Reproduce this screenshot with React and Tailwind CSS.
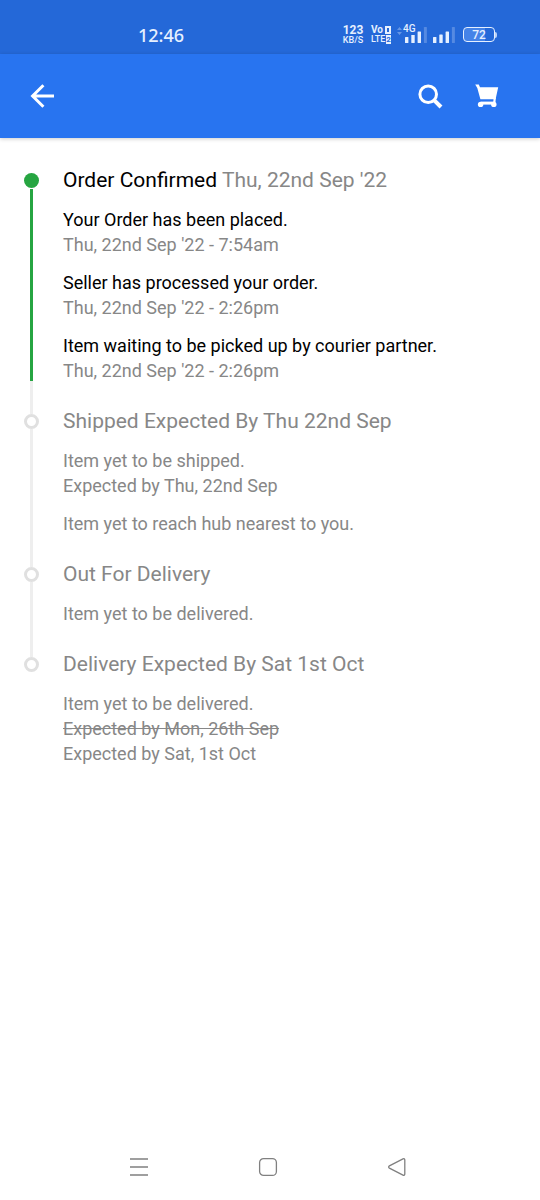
const steps = [
  {
    title: 'Order Confirmed',
    date: "Thu, 22nd Sep '22",
    done: true,
    events: [
      { text: 'Your Order has been placed.', lines: [{ text: "Thu, 22nd Sep '22 - 7:54am" }] },
      { text: 'Seller has processed your order.', lines: [{ text: "Thu, 22nd Sep '22 - 2:26pm" }] },
      { text: 'Item waiting to be picked up by courier partner.', lines: [{ text: "Thu, 22nd Sep '22 - 2:26pm" }] },
    ],
  },
  {
    title: 'Shipped Expected By Thu 22nd Sep',
    events: [
      { text: 'Item yet to be shipped.', lines: [{ text: 'Expected by Thu, 22nd Sep' }] },
      { text: 'Item yet to reach hub nearest to you.', lines: [] },
    ],
  },
  {
    title: 'Out For Delivery',
    events: [{ text: 'Item yet to be delivered.', lines: [] }],
  },
  {
    title: 'Delivery Expected By Sat 1st Oct',
    events: [
      {
        text: 'Item yet to be delivered.',
        lines: [{ text: 'Expected by Mon, 26th Sep', old: true }, { text: 'Expected by Sat, 1st Oct' }],
      },
    ],
  },
];

function SignalBars() {
  return (
    <svg width="22" height="16" viewBox="0 0 22 16" fill="#e6f0ff" aria-hidden="true">
      <rect x="0" y="10" width="3.4" height="6" rx="0.6" />
      <rect x="6.3" y="7.5" width="3.4" height="8.5" rx="0.6" />
      <rect x="12.6" y="4.5" width="3.4" height="11.5" rx="0.6" />
      <rect x="18.9" y="0" width="3" height="16" rx="0.6" fillOpacity="0.25" />
    </svg>
  );
}

function StatusBar() {
  return (
    <div className="flex h-[54px] items-center justify-between bg-[#2468d8] pt-[15px] pr-[43px] pl-[138px] text-[#e6f0ff]">
      <span className="font-['Noto_Sans',sans-serif] text-lg leading-5 font-medium">12:46</span>
      <div className="flex items-center gap-1.5">
        <div className="flex w-5 flex-col items-center font-medium">
          <span className="text-[12px] leading-[10px] font-bold">123</span>
          <span className="text-[9px] leading-[10px]">KB/S</span>
        </div>
        <div className="ml-0.5 flex w-5 flex-col gap-px text-[10px] leading-[9px] font-bold">
          <span className="flex items-center justify-between">
            Vo
            <span className="h-[8px] w-[6px] border-2 border-[#e6f0ff]" />
          </span>
          <span className="flex items-center justify-between text-[9px] font-medium">
            LTE
            <span className="w-[5px] bg-[#e6f0ff] text-center text-[8px] font-bold text-[#2468d8]">2</span>
          </span>
        </div>
        <div className="relative ml-2 flex">
          <SignalBars />
          <span className="absolute -top-1 -left-0.5 bg-[#2468d8] text-[10px] leading-[12px] font-medium">4G</span>
          <svg className="absolute top-0 -left-2" width="5" height="8" viewBox="0 0 5 8" fill="#e6f0ff" fillOpacity="0.35" aria-hidden="true">
            <path d="M2.5 0 5 3H0zM2.5 8 0 5h5z" />
          </svg>
        </div>
        <SignalBars />
        <div className="ml-0.5 flex items-center">
          <span className="h-[15px] w-8 rounded-[4px] border border-[#e6f0ff] bg-linear-to-r from-[#4583e8] from-70% to-[#2468d8] to-70% text-center text-[12px] leading-[14px] font-medium">
            72
          </span>
          <span className="h-1.5 w-0.5 rounded-r-sm bg-[#b9d2fa]" />
        </div>
      </div>
    </div>
  );
}

function Header() {
  return (
    <header className="flex h-[84px] items-center justify-between bg-[#2874f0] pr-[41px] pl-[30px] text-white shadow-[0_1px_4px_rgba(0,0,0,0.2)]">
      <button type="button" aria-label="Back">
        <svg width="24" height="24" viewBox="0 0 24 24" fill="none" stroke="currentColor" strokeWidth="3">
          <path d="M24 12H3M13.4 1.2 2.6 12l10.8 10.8" />
        </svg>
      </button>
      <div className="flex items-center gap-8">
        <button type="button" aria-label="Search">
          <svg width="25" height="25" viewBox="0 0 25 25" fill="none" stroke="currentColor">
            <circle cx="10.2" cy="10.2" r="8.3" strokeWidth="3" />
            <path d="m15.8 15.8 7.2 7.2" strokeWidth="4" />
          </svg>
        </button>
        <button type="button" aria-label="Cart">
          <svg width="24" height="24" viewBox="0 0 24 24" fill="currentColor">
            <path d="M.2.4h3.6l1.2 2.8h18.2l-2.6 12H5.4L2.3 4z" />
            <path d="M18.6 14h2.2l-.4 5h-2.2z" />
            <path d="M5.8 17.6h14v3h-14z" />
            <circle cx="5.6" cy="20.4" r="2.7" />
            <circle cx="18.8" cy="20.4" r="2.7" />
          </svg>
        </button>
      </div>
    </header>
  );
}

function Step({ step, first, last }) {
  const { title, date, done, events } = step;
  return (
    <li className="flex gap-6">
      <div className="flex w-[15px] shrink-0 flex-col items-center">
        <span className={`h-[7px] w-[3px] ${first ? '' : 'bg-[#eeeeee]'}`} />
        <span className={`size-[15px] shrink-0 rounded-full ${done ? 'bg-[#26a541]' : 'border-3 border-[#e0e0e0]'}`} />
        {!last && <span className={`w-[3px] flex-1 ${done ? 'mt-px bg-[#26a541]' : 'bg-[#eeeeee]'}`} />}
        {done && <span className="h-[26px] w-[3px] bg-[#eeeeee]" />}
      </div>
      <div className={`pb-6 ${done ? 'text-black' : 'text-[#878787]'}`}>
        <h2 className="text-[21px] leading-7">
          {title} {date && <span className="text-[#878787]">{date}</span>}
        </h2>
        <div className="mt-[13px] flex flex-col gap-[13px] text-lg leading-[25px]">
          {events.map((event, i) => (
            <div key={i}>
              <p>{event.text}</p>
              {event.lines.map((line) => (
                <p key={line.text} className={`text-[#878787] ${line.old ? 'line-through' : ''}`}>
                  {line.text}
                </p>
              ))}
            </div>
          ))}
        </div>
      </div>
    </li>
  );
}

function NavBar() {
  return (
    <nav className="flex justify-center gap-[109px] pr-1 pb-[23px] text-[#808080]">
      <button type="button" aria-label="Recent apps">
        <svg width="20" height="20" viewBox="0 0 20 20" fill="none" stroke="currentColor" strokeWidth="1.5">
          <path d="M1 2h18M1 10h18M1 18h18" />
        </svg>
      </button>
      <button type="button" aria-label="Home">
        <svg width="20" height="20" viewBox="0 0 20 20" fill="none" stroke="currentColor" strokeWidth="1.3">
          <rect x="1.6" y="1.6" width="16.8" height="16.8" rx="4" />
        </svg>
      </button>
      <button type="button" aria-label="Back to previous app">
        <svg width="20" height="20" viewBox="0 0 20 20" fill="none" stroke="currentColor" strokeWidth="1.3">
          <path d="M16 1.9 2.4 8.9c-1 .6-1 1.6 0 2.2L16 18.1c1 .5 1.8 0 1.8-1V3c0-1-.8-1.6-1.8-1.1z" />
        </svg>
      </button>
    </nav>
  );
}

export default function App() {
  return (
    <div className="flex min-h-screen flex-col bg-white font-[Roboto,sans-serif]">
      <StatusBar />
      <Header />
      <main className="flex-1 px-6 pt-7">
        <ol>
          {steps.map((step, i) => (
            <Step key={step.title} step={step} first={i === 0} last={i === steps.length - 1} />
          ))}
        </ol>
      </main>
      <NavBar />
    </div>
  );
}
